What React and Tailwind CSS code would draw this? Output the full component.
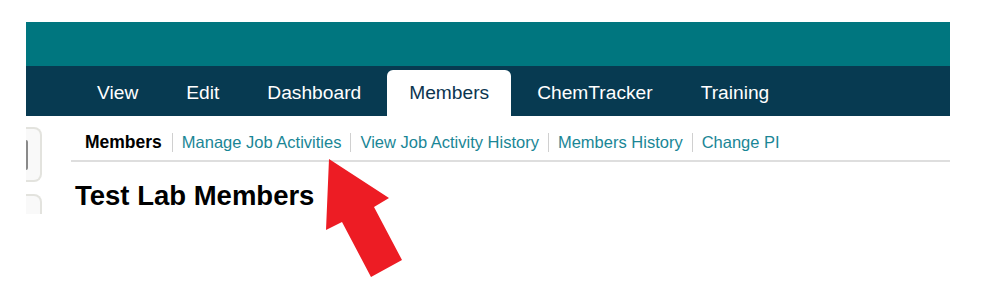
import React from 'react';

const tabs = ['View', 'Edit', 'Dashboard', 'Members', 'ChemTracker', 'Training'];
const subLinks = ['Manage Job Activities', 'View Job Activity History', 'Members History', 'Change PI'];

const App = () => {
  return (
    <div className="relative w-[1008px] h-[298px] overflow-hidden bg-white font-['Liberation_Sans',Arial,sans-serif]">
      {/* header bars */}
      <div className="pt-[22px] pl-[26px] w-[950px]">
        <div className="h-[44px] bg-[#00767f]" />
        <div className="h-[50px] bg-[#073a51] flex items-end pl-[49px] gap-[4px]">
          {tabs.map((tab) => (
            <div
              key={tab}
              className={`h-[46px] px-[22px] flex items-center text-[19.2px] ${
                tab === 'Members' ? 'bg-white text-[#0b3550] rounded-t-[6px]' : 'text-white'
              }`}
            >
              {tab}
            </div>
          ))}
        </div>
      </div>

      <div className="flex pl-[26px] w-[950px]">
        {/* clipped sidebar */}
        <div className="w-[16px] h-[98px] overflow-hidden pt-[11px] flex flex-col gap-[12px]">
          <div className="shrink-0 h-[55px] w-[16px] bg-[#f9f9f9] border-[2px] border-l-0 border-[#e3e3de] rounded-r-[8px] flex items-center">
            <div className="h-[30px] w-[2px] border-r-[2px] border-[#8a8a8a] rounded-r-[2px]" />
          </div>
          <div className="shrink-0 h-[40px] w-[16px] bg-[#f9f9f9] border-[2px] border-l-0 border-[#e3e3de] rounded-tr-[8px]" />
        </div>

        {/* main */}
        <div className="ml-[29px] flex-1">
          <div className="flex pl-[4px] pt-[17px] pb-[8px] border-b-2 border-[#dedede] text-[16.5px] leading-[19px]">
            <span className="px-[10px] text-[17.5px] font-bold text-black">Members</span>
            {subLinks.map((link) => (
              <span key={link} className="px-[9px] border-l border-[#d0d0d0] text-[#1a8696]">
                {link}
              </span>
            ))}
          </div>
          <h1 className="mt-[18px] pl-[4px] text-[27.5px] leading-[31px] font-bold text-black">Test Lab Members</h1>
        </div>
      </div>

      {/* red arrow overlay */}
      <svg className="absolute left-0 top-0" width="1008" height="298" viewBox="0 0 1008 298">
        <polygon
          points="329,159 389,198 374,207 402,260 371,277 342,222 326,230"
          fill="#ed1c24"
        />
      </svg>
    </div>
  );
};

export default App;
